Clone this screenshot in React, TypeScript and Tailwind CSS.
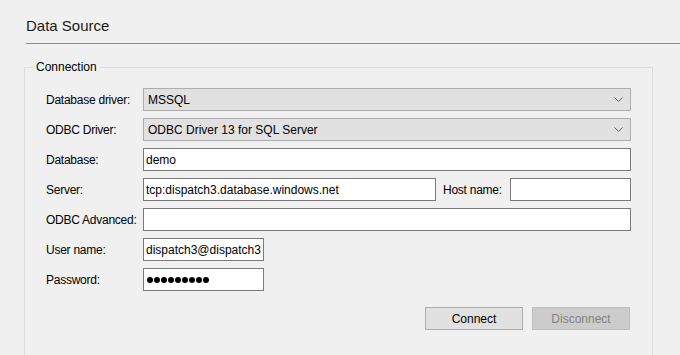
import React from "react";

const font = { fontFamily: '"Liberation Sans", Arial, sans-serif' };

function Chevron() {
  return (
    <svg width="9" height="5" viewBox="0 0 9 5" className="shrink-0">
      <path d="M0.5 0.5 L4.5 4.5 L8.5 0.5" fill="none" stroke="#5f5f5f" strokeWidth="1" />
    </svg>
  );
}

function Select({ value }: { value: string }) {
  return (
    <div className="flex h-[23px] w-[488px] items-center justify-between border border-[#adadad] bg-[#e1e1e1] pl-[4px] pr-[7px] text-[12px] text-black">
      <span>{value}</span>
      <Chevron />
    </div>
  );
}

function TextBox({ value, w, children }: { value?: string; w: string; children?: React.ReactNode }) {
  return (
    <div className={`flex h-[23px] ${w} items-center overflow-hidden border border-[#7a7a7a] bg-white pl-[2px] text-[12px] text-black whitespace-nowrap`}>
      {children ?? value}
    </div>
  );
}

function Row({ label, children }: { label: string; children: React.ReactNode }) {
  return (
    <div className="flex h-[23px] items-center">
      <div className="w-[97px] shrink-0 text-[12px] tracking-[-0.25px] text-black">{label}</div>
      {children}
    </div>
  );
}

export default function App() {
  return (
    <div className="h-[355px] w-[680px] overflow-hidden bg-[#f0f0f0]" style={font}>
      <div className="ml-[26px] pt-[16px]">
        <div className="h-[20px] text-[15px] leading-[20px] text-[#1a1a1a]">Data Source</div>
        <div className="mt-[7px] h-px bg-[#8c8c8c]" />
      </div>
      <fieldset className="ml-[24px] mt-[15px] w-[629px] border border-[#dcdcdc] px-[21px] pb-[40px] pt-[13px]">
        <legend className="ml-[-13px] px-[3px] text-[12px] leading-[16px] text-black">Connection</legend>
        <div className="flex flex-col gap-[7px]">
          <Row label="Database driver:">
            <Select value="MSSQL" />
          </Row>
          <Row label="ODBC Driver:">
            <Select value="ODBC Driver 13 for SQL Server" />
          </Row>
          <Row label="Database:">
            <TextBox w="w-[488px]" value="demo" />
          </Row>
          <Row label="Server:">
            <TextBox w="w-[293px]" value="tcp:dispatch3.database.windows.net" />
            <div className="ml-[7px] w-[67px] text-[12px] tracking-[-0.25px] text-black">Host name:</div>
            <TextBox w="w-[121px]" />
          </Row>
          <Row label="ODBC Advanced:">
            <TextBox w="w-[488px]" />
          </Row>
          <Row label="User name:">
            <TextBox w="w-[121px]" value="dispatch3@dispatch3" />
          </Row>
          <Row label="Password:">
            <TextBox w="w-[121px]">
              <span className="flex gap-[1px] pl-[1px]">
                {Array.from({ length: 9 }).map((_, i) => (
                  <span key={i} className="h-[6px] w-[6px] rounded-full bg-black" />
                ))}
              </span>
            </TextBox>
          </Row>
        </div>
        <div className="mt-[16px] flex justify-end gap-[9px] pr-[1px]">
          <button className="h-[23px] w-[98px] border border-[#adadad] bg-[#e1e1e1] text-[12px] text-black">
            Connect
          </button>
          <button className="h-[23px] w-[98px] border border-[#bfbfbf] bg-[#cccccc] text-[12px] text-[#838383]">
            Disconnect
          </button>
        </div>
      </fieldset>
    </div>
  );
}
